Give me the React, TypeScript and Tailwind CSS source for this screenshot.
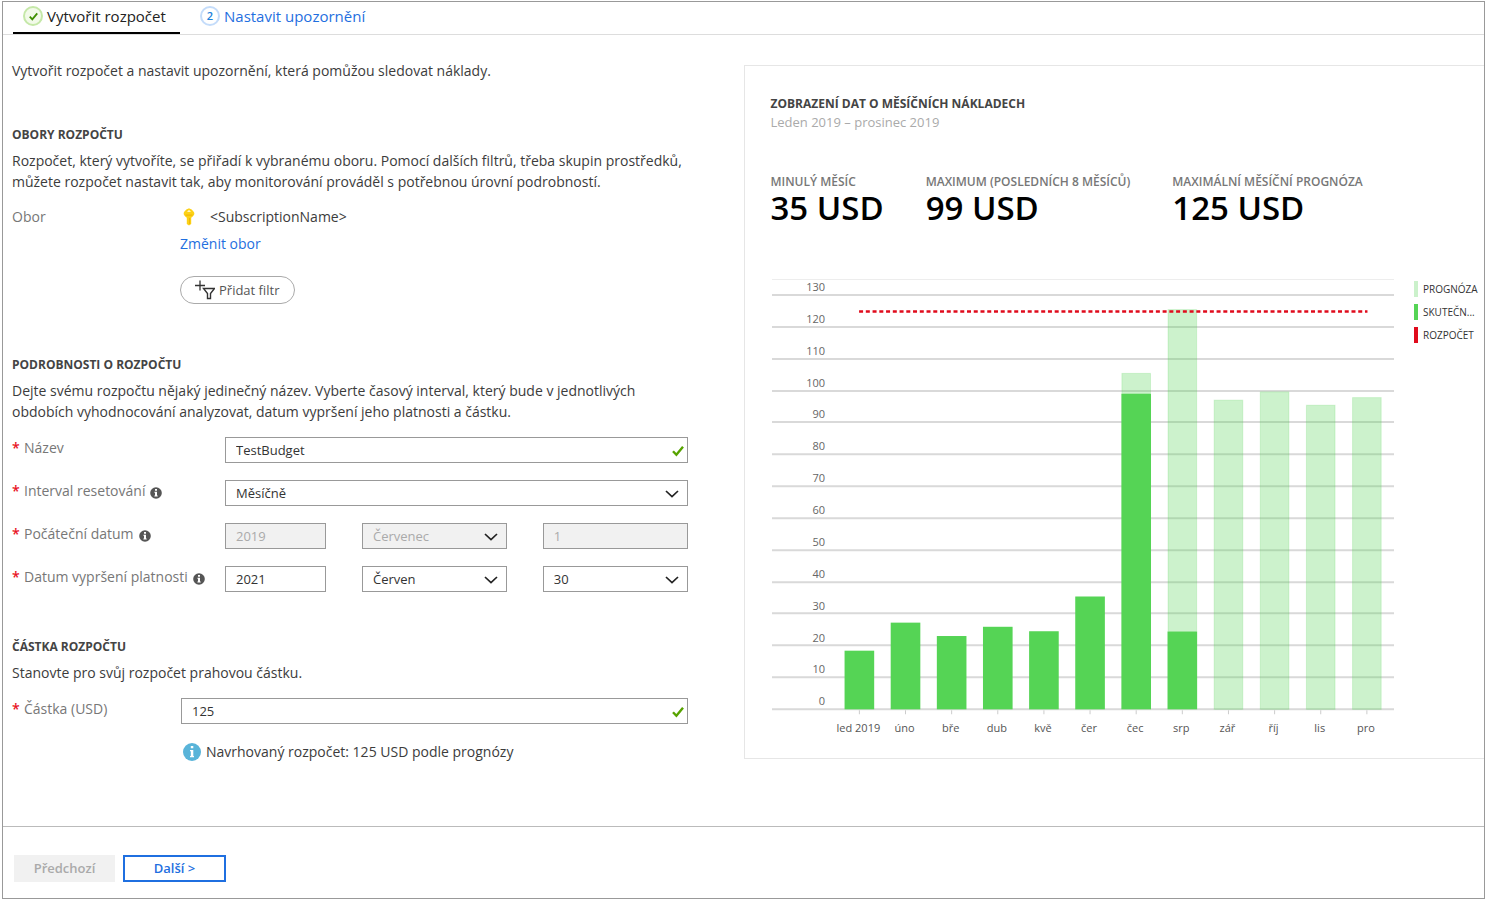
import type { ReactNode } from "react";

type MonthCost = { label: string; actual?: number; forecast?: number };

const months: MonthCost[] = [
	{ label: "led 2019", actual: 18.4 },
	{ label: "úno", actual: 27.2 },
	{ label: "bře", actual: 23 },
	{ label: "dub", actual: 25.9 },
	{ label: "kvě", actual: 24.5 },
	{ label: "čer", actual: 35.4 },
	{ label: "čec", actual: 99, forecast: 105.4 },
	{ label: "srp", actual: 24.4, forecast: 125.4 },
	{ label: "zář", forecast: 97 },
	{ label: "říj", forecast: 99.6 },
	{ label: "lis", forecast: 95.4 },
	{ label: "pro", forecast: 97.8 },
];

const ticks = [0, 10, 20, 30, 40, 50, 60, 70, 80, 90, 100, 110, 120, 130];

const stats = [
	{ label: "MINULÝ MĚSÍC", value: "35 USD" },
	{ label: "MAXIMUM (POSLEDNÍCH 8 MĚSÍCŮ)", value: "99 USD" },
	{ label: "MAXIMÁLNÍ MĚSÍČNÍ PROGNÓZA", value: "125 USD" },
];

const legend = [
	{ label: "PROGNÓZA", color: "bg-[#cbf1cb]" },
	{ label: "SKUTEČN...", color: "bg-[#55d455]" },
	{ label: "ROZPOČET", color: "bg-[#e00b1c]" },
];

function CheckIcon({ className }: { className?: string }) {
	return (
		<svg viewBox="0 0 12 12" className={className} fill="none" stroke="currentColor" strokeWidth="2.4" aria-hidden>
			<path d="M1 6.2 4.4 9.8 11 1.8" />
		</svg>
	);
}

function InfoIcon() {
	return (
		<svg viewBox="0 0 12 12" className="h-3 w-3 shrink-0" aria-hidden>
			<circle cx="6" cy="6" r="5.8" fill="#555" />
			<path d="M5 2h2v1.7H5zM4.4 4.8H7v3.6h.7v1H4.4v-1H5V5.8h-.6z" fill="#fff" />
		</svg>
	);
}

function KeyIcon() {
	return (
		<svg viewBox="0 0 12 18" className="h-[18px] w-3" aria-hidden>
			<path d="M6 .5c1.7 0 4.8 2.4 5.3 4.6.3 1.6-.7 3.1-3.1 4.6V16L6 17.5 3.8 16V9.7C1.4 8.2.4 6.7.7 5.1 1.2 2.9 4.3.5 6 .5z" fill="#fcd116" />
			<path d="M6 1.8 8 4H4z" fill="#fff5c0" />
			<path d="M2.5 7.1h7" stroke="#f0b400" strokeWidth="1" />
			<path d="M6.6 10v6" stroke="#e8ac00" strokeWidth=".8" />
		</svg>
	);
}

function AddFilterIcon() {
	return (
		<svg viewBox="0 0 20 20" className="h-5 w-5" fill="none" stroke="#333" aria-hidden>
			<path d="M5 .5v10M0 5.5h10" strokeWidth="1.3" />
			<path d="M8.5 8.5h11l-4 5v5h-3v-5z" strokeWidth="1.4" />
		</svg>
	);
}

function SectionTitle({ children }: { children: ReactNode }) {
	return <h2 className="text-xs leading-5 font-bold text-[#444]">{children}</h2>;
}

function FieldLabel({ id, text, info }: { id: string; text: string; info?: boolean }) {
	return (
		<label htmlFor={id} className="flex items-center gap-1 pb-1 text-sm leading-5 text-[#777]">
			<span className="w-2 font-semibold text-[#e81123]">*</span>
			<span>{text}</span>
			{info && (
				<span className="pt-1 pl-px">
					<InfoIcon />
				</span>
			)}
		</label>
	);
}

function TextBox({ id, value, disabled, valid, label }: { id: string; value: string; disabled?: boolean; valid?: boolean; label?: string }) {
	return (
		<div className="relative">
			<input
				id={id}
				type="text"
				defaultValue={value}
				disabled={disabled}
				aria-label={label}
				className="block h-[26px] w-full border border-[#999] bg-white px-[10px] text-[13px] text-[#333] disabled:bg-[#f1f1f1] disabled:text-[#aaa]"
			/>
			{valid && <CheckIcon className="absolute top-2 right-1 h-3 w-3 text-[#57a300]" />}
		</div>
	);
}

function SelectBox({ id, value, disabled, label }: { id: string; value: string; disabled?: boolean; label?: string }) {
	return (
		<div className="relative">
			<select
				id={id}
				defaultValue={value}
				disabled={disabled}
				aria-label={label}
				className="block h-[26px] w-full appearance-none border border-[#999] bg-white px-[10px] text-[13px] text-[#333] disabled:bg-[#f1f1f1] disabled:text-[#aaa] disabled:opacity-100"
			>
				<option>{value}</option>
			</select>
			<svg viewBox="0 0 14 8" className="pointer-events-none absolute top-[10px] right-[9px] h-2 w-[14px]" fill="none" stroke="#222" strokeWidth="1.7" aria-hidden>
				<path d="M1 1l6 5.7L13 1" />
			</svg>
		</div>
	);
}

function CostChart() {
	const y = (value: number) => 431 - value * 3.185;
	const x = (index: number) => 87.3 + index * 46.1;

	return (
		<svg viewBox="0 0 622 460" className="h-auto w-full" role="img" aria-label="Měsíční náklady">
			<path d="M0 1.5h622" stroke="#ededed" />
			{ticks.map((tick) => (
				<g key={tick}>
					<path d={`M0 ${Math.round(y(tick))}h622`} stroke="#d9d9d9" strokeWidth="2" />
					<text x="53" y={y(tick) - 4} textAnchor="end" fontSize="11" fill="#666">
						{tick}
					</text>
				</g>
			))}
			{months.map((month, i) => (
				<g key={month.label}>
					<path d={`M${x(i)} 432v4`} stroke="#ccc" />
					{month.forecast && (
						<rect x={x(i) - 14.3} y={y(month.forecast)} width="28.6" height={y(month.actual ?? 0) - y(month.forecast)} fill="#55d455" fillOpacity=".3" stroke="#55d455" strokeOpacity=".2" />
					)}
					{month.actual && <rect x={x(i) - 14.8} y={y(month.actual)} width="29.6" height={y(0) - y(month.actual)} fill="#55d455" />}
					<text x={x(i) - 1} y="454" textAnchor="middle" fontSize="11" fill="#555">
						{month.label}
					</text>
				</g>
			))}
			<path d="M87 33.5h508" stroke="#e00b1c" strokeWidth="2.5" strokeDasharray="4 2.74" />
		</svg>
	);
}

export default function App() {
	return (
		<div className="min-h-screen bg-white pt-px pr-px pb-px pl-[2px] font-['Open_Sans',sans-serif]">
			<div className="flex min-h-[calc(100vh-2px)] flex-col border border-[#999]">
				<nav className="flex h-[33px] gap-5 border-b border-[#ddd] pl-[10px] text-[15px]">
					<a href="#create" className="flex h-8 w-[167px] items-center gap-1 border-b-2 border-black pl-[10px] pb-[2px] text-[#222]">
						<span className="flex h-5 w-5 items-center justify-center rounded-full border-2 border-[#c5e8a8] bg-[#f2fae9]">
							<CheckIcon className="h-[9px] w-[9px] text-[#3f8f00]" />
						</span>
						Vytvořit rozpočet
					</a>
					<a href="#alerts" className="flex h-8 items-center gap-1 pb-1 text-[#1f6fe0]">
						<span className="flex h-5 w-5 items-center justify-center rounded-full border-2 border-[#c4dcfa] text-[11px] font-semibold text-[#1a80d9]">2</span>
						Nastavit upozornění
					</a>
				</nav>

				<main className="grid grow grid-cols-2 text-sm text-[#3c3c3c]">
					<form className="pt-[26px] pr-14 pl-[9px]">
						<p className="leading-5">Vytvořit rozpočet a nastavit upozornění, která pomůžou sledovat náklady.</p>

						<section className="mt-11">
							<SectionTitle>OBORY ROZPOČTU</SectionTitle>
							<p className="mt-[5px] leading-[21px]">
								Rozpočet, který vytvoříte, se přiřadí k vybranému oboru. Pomocí dalších filtrů, třeba skupin prostředků, můžete rozpočet nastavit tak, aby monitorování prováděl s potřebnou úrovní podrobností.
							</p>
							<div className="mt-[15px] grid grid-cols-[168px_1fr] leading-5">
								<span className="text-[#777]">Obor</span>
								<div className="flex flex-col items-start">
									<span className="flex items-center gap-[15px] pl-[3px]">
										<KeyIcon />
										&lt;SubscriptionName&gt;
									</span>
									<a href="#scope" className="mt-[7px] text-[#1f6fe0]">
										Změnit obor
									</a>
									<button type="button" className="mt-[22px] flex h-7 items-center gap-1 rounded-full border border-[#aaa] px-[14px] text-[13px] text-[#555]">
										<AddFilterIcon />
										Přidat filtr
									</button>
								</div>
							</div>
						</section>

						<section className="mt-[51px]">
							<SectionTitle>PODROBNOSTI O ROZPOČTU</SectionTitle>
							<p className="mt-[5px] max-w-[640px] leading-[21px]">
								Dejte svému rozpočtu nějaký jedinečný název. Vyberte časový interval, který bude v jednotlivých obdobích vyhodnocování analyzovat, datum vypršení jeho platnosti a částku.
							</p>
							<div className="mt-[15px] grid grid-cols-[213px_1fr] items-center gap-y-[17px]">
								<FieldLabel id="name" text="Název" />
								<TextBox id="name" value="TestBudget" valid />

								<FieldLabel id="interval" text="Interval resetování" info />
								<SelectBox id="interval" value="Měsíčně" />

								<FieldLabel id="start" text="Počáteční datum" info />
								<div className="grid grid-cols-[101px_1fr_1fr] gap-9">
									<TextBox id="start" value="2019" disabled />
									<SelectBox id="start-month" value="Červenec" label="Počáteční měsíc" disabled />
									<TextBox id="start-day" value="1" label="Počáteční den" disabled />
								</div>

								<FieldLabel id="end" text="Datum vypršení platnosti" info />
								<div className="grid grid-cols-[101px_1fr_1fr] gap-9">
									<TextBox id="end" value="2021" />
									<SelectBox id="end-month" value="Červen" label="Měsíc vypršení" />
									<SelectBox id="end-day" value="30" label="Den vypršení" />
								</div>
							</div>
						</section>

						<section className="mt-[45px]">
							<SectionTitle>ČÁSTKA ROZPOČTU</SectionTitle>
							<p className="mt-[5px] leading-[21px]">Stanovte pro svůj rozpočet prahovou částku.</p>
							<div className="mt-[15px] grid grid-cols-[169px_1fr] items-center">
								<FieldLabel id="amount" text="Částka (USD)" />
								<TextBox id="amount" value="125" valid />
							</div>
							<p className="mt-[18px] flex items-center gap-[5px] pl-[171px] leading-5">
								<svg viewBox="0 0 18 18" className="h-[18px] w-[18px]" aria-hidden>
									<circle cx="9" cy="9" r="9" fill="#59b4d9" />
									<path d="M7.8 3h2.500v2.300H7.800zM7 7h3.300v6H11v1.300H7V13h.8V8.300H7z" fill="#fff" />
								</svg>
								Navrhovaný rozpočet: 125 USD podle prognózy
							</p>
						</section>
					</form>

					<aside className="mt-[30px] mb-[67px] border border-r-0 border-[#e6e6e6] pt-7 pr-[6px] pl-[26px]">
						<SectionTitle>ZOBRAZENÍ DAT O MĚSÍČNÍCH NÁKLADECH</SectionTitle>
						<p className="text-[13px] leading-4 text-[#aaa]">Leden 2019 – prosinec 2019</p>
						<dl className="mt-11 flex gap-[42px]">
							{stats.map((stat) => (
								<div key={stat.label}>
									<dt className="text-xs leading-4 font-semibold text-[#777]">{stat.label}</dt>
									<dd className="text-[33px] leading-9 font-semibold text-black">{stat.value}</dd>
								</div>
							))}
						</dl>
						<div className="mt-[52px] flex items-start gap-5 pl-px">
							<div className="min-w-0 flex-1">
								<CostChart />
							</div>
							<ul className="flex w-16 flex-col gap-[7px] pt-[3px] text-[10px] leading-4 text-[#333]">
								{legend.map((item) => (
									<li key={item.label} className="flex gap-[5px] whitespace-nowrap">
										<span className={`h-4 w-1 shrink-0 ${item.color}`} />
										{item.label}
									</li>
								))}
							</ul>
						</div>
					</aside>
				</main>

				<footer className="flex gap-2 border-t border-[#bbb] pt-7 pb-4 pl-[11px] text-[13px] font-semibold">
					<button type="button" disabled className="h-[27px] w-[101px] bg-[#f1f1f1] text-[#aaa]">
						Předchozí
					</button>
					<button type="button" className="h-[27px] w-[103px] border-2 border-[#1f6fe0] text-[#1f6fe0]">
						Další &gt;
					</button>
				</footer>
			</div>
		</div>
	);
}
